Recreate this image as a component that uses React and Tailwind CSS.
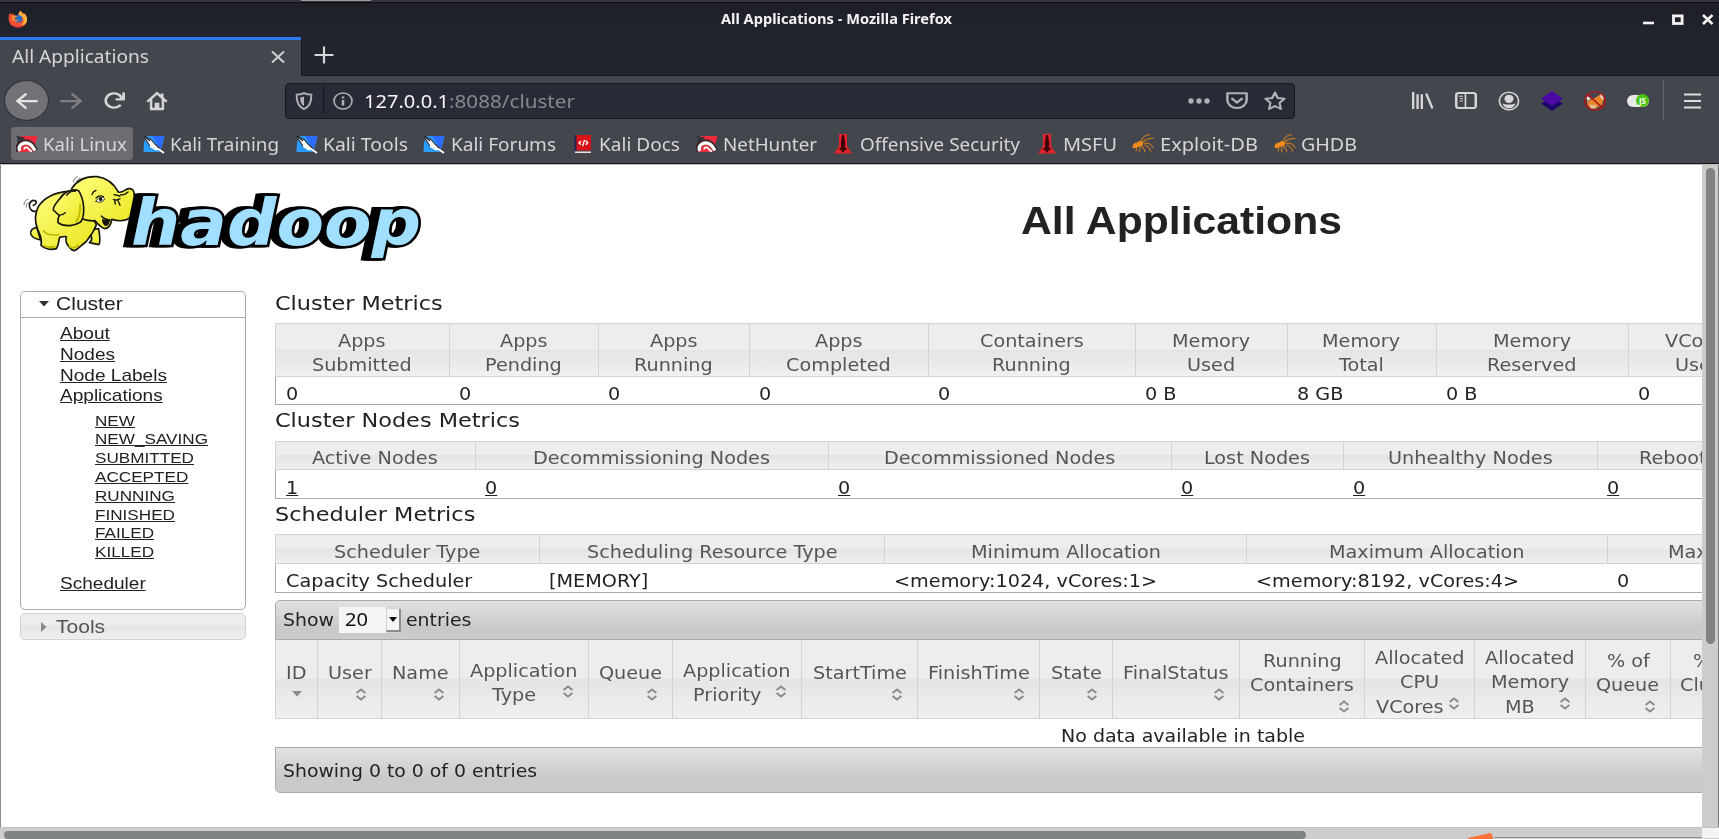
import React, { useLayoutEffect, useRef, useState } from "react";

const STRETCH = 1.108;

/* Text drawn with a horizontal stretch `k`; `w` fits it to an exact width. */
function T({ children, w, k = STRETCH, className = "" }) {
  const ref = useRef(null);
  const [natural, setNatural] = useState(0);
  useLayoutEffect(() => {
    if (!natural) setNatural(ref.current.getBoundingClientRect().width);
  }, [natural]);
  const scale = w && natural ? w / natural : k;
  return (
    <span className="inline-block shrink-0 align-top" style={natural ? { width: natural * scale } : undefined}>
      <span
        ref={ref}
        className={"block w-max whitespace-nowrap origin-left " + className}
        style={natural ? { transform: `scaleX(${scale})` } : undefined}
      >
        {children}
      </span>
    </span>
  );
}

/* ---------- icons ---------- */

function Icon({ size = "h-5 w-[22px]", className = "", children }) {
  return (
    <svg viewBox="0 0 16 16" preserveAspectRatio="none" className={"shrink-0 " + size + " " + className} fill="currentColor">
      {children}
    </svg>
  );
}

const BACK =
  "M15 7H3.414l4.293-4.293a1 1 0 0 0-1.414-1.414l-6 6a1 1 0 0 0 0 1.414l6 6a1 1 0 0 0 1.414-1.414L3.414 9H15a1 1 0 0 0 0-2z";

function Firefox() {
  return (
    <svg viewBox="0 0 20 18" className="h-[18px] w-5 shrink-0">
      <path d="M1 4.500 2.500 3l.8 1.600L5 3l.5 2L9 6l4-5 2 2.500C18 5 19.300 8 19 10.500 18.500 15 14.500 17.500 10 17.500S1 14.500.7 9.500C.6 7.500.8 6 1 4.500z" fill="#f4512f" />
      <path d="M12.500.5c-2 2-2.500 4-1.500 5.500 3 .5 5 2.500 4.500 5.500-.4 2-1.500 3-3 3.500 4 .5 6.500-2 6.600-5C19.300 5 16 2.500 15 4c-1-1-2.200-2-2.500-3.500z" fill="#ffb13b" />
      <path d="M2 13c3 4.500 11 4.500 14 .5-2 3-4.500 4-7 3.900C6 17 3.500 15.500 2 13z" fill="#e4244f" />
      <ellipse cx="10" cy="8.800" rx="4.400" ry="3.800" fill="#2f68c5" />
      <path d="M4 6c2-1 4-.6 5.500.8-1 .9-2.700.6-3 1.700C7 10 9 10.500 11 9.800c-1 2.200-6 2.500-7.500-1z" fill="#ff8a2b" />
    </svg>
  );
}

function KaliMark({ red }) {
  return (
    <svg viewBox="0 0 22 20" className="h-5 w-[22px] shrink-0">
      {red ? (
        <>
          <path d="M4 2h17.500L17 18H.5L3 10z" fill="#ee2a3c" />
          <path d="M0 1c3 2 5 1.500 9 2.500L1.500 12C0 8 3 5 1 4z" fill="#33353c" />
          <path d="M3 17C0 12.500 4.500 8 10 8c4.500.2 6.500 3 9.500 8.500" fill="none" stroke="#3a2a31" strokeWidth="5.400" />
          <path d="M4 17C1.500 13 5 9 10 8.800c4.500.2 6.500 3.200 9 7.700" fill="none" stroke="#fff" strokeWidth="3.200" />
          <path d="M8 15.500c0-2.500 3-3 4.500-.8 1 1.500 2 2.300 3.500 2.800" fill="none" stroke="#fff" strokeWidth="1.800" />
        </>
      ) : (
        <>
          <path d="M1 8 4 2h17.500L17.500 18H.5z" fill="#2a9cff" />
          <path d="M9 2h12.500l-4 14z" fill="#2d6bff" />
          <path d="M0 1.500 8 5.500l4.500 5 9 8.500-8-4-6-2-2.500-4z" fill="#fff" stroke="#2c2e35" strokeWidth="1.100" />
          <path d="m7 12 5 3 4 .5 5 3.500" fill="none" stroke="#fff" strokeWidth="2" />
          <path d="m1 2 6 5" stroke="#2c2e35" strokeWidth="1.600" />
        </>
      )}
    </svg>
  );
}

function DocsMark() {
  return (
    <svg viewBox="0 0 22 20" className="h-5 w-[22px] shrink-0">
      <path d="M2 1h16v15.500H2z" fill="#d8141a" />
      <path d="M1.500 1h2v16h-2z" fill="#2a2350" />
      <path d="M2 17.500h16v1.500H2z" fill="#e9e4e0" />
      <path d="m8 7-2 2 2 1.800m4.500-4.300 2.300 2.300-2 2M11.500 6l-1.800 6" fill="none" stroke="#fff" strokeWidth="1.300" />
    </svg>
  );
}

function OffsecMark() {
  return (
    <svg viewBox="0 0 22 20" className="h-5 w-[22px] shrink-0">
      <path d="M7 0h8v12l5 7.500H2L7 12z" fill="#e3222b" />
      <path d="M10 1h2l1.200 8-.4 4 2.700 2.500-2.500.5-2 3-2-3-2.500-.5L9.200 13l-.4-4z" fill="#3b0508" />
    </svg>
  );
}

function BugMark() {
  return (
    <svg viewBox="0 0 22 20" className="h-5 w-[22px] shrink-0" fill="none" stroke="#c87a22" strokeWidth="1.100">
      <path d="M.5 13c0-3 2-4.500 5-4.500 1-2 4-2 5.500-.5 1 2-.5 4.500-3 4.500C6 12.500 5 14 3 14c-1 0-2 1-2.500-1z" fill="#f08a1c" stroke="none" />
      <path d="M9 8c1-4 4-7 9-7.500M11 8c3-3 6-4 10.500-3.500M12 9.500c4-1 6-.5 9.500 4.500M12 11c3 0 5 2 7 6.500M9 12c3 1.500 3.500 3 4 6.500M5 13l-1 4.500M8 12l-.5 6" />
    </svg>
  );
}

function Elephant() {
  return (
    <svg viewBox="60 522 348 240" className="h-20 w-[116px] shrink-0" strokeLinejoin="round" strokeLinecap="round">
      <defs>
        <linearGradient id="skin" x1="0" y1="0" x2="1" y2="1">
          <stop offset="0" stopColor="#ffff7d" />
          <stop offset="1" stopColor="#e9e51c" />
        </linearGradient>
      </defs>
      <g fill="url(#skin)" stroke="#16160c" strokeWidth="5">
        <path d="M112 632c-14 6-24-4-24-16 0-10 10-18 18-14 6 4 2 12-6 14" fill="none" />
        <path d="M110 682c-12 2-20 10-18 20 6 12 16 16 30 18z" />
        <path d="M266 690c6 14 16 30 2 38l28 6c6-4 4-24 0-48z" />
        <path d="M205 574c-40 2-74 20-90 46-12 24-10 48-2 68 8 18 14 32 10 48 10 12 30 14 46 10 8-10 6-22 10-34 8-2 16-4 20-2-4 14 0 22 8 30 6 8 8 12 16 12 14-6 22-18 34-26 8-10 22-24 32-52l-30-60z" />
        <path d="M215 566c16-26 42-38 76-36 30 4 50 20 64 46 12 4 20-8 30-10 12-2 18 6 18 20 4 24 2 50-10 64-16 16-38 14-58 8-2 16-8 26-20 28-12-2-20-12-30-24-18 2-28-2-40-6z" />
        <path d="M236 572c-22-8-46 6-58 26-10 12-20 22-18 32 6 6 12 12 18 16-4 8-6 14-4 22 22 16 52 8 68-2 14-20 12-64-6-94z" />
      </g>
      <path d="M306 656c8 3 16 4 24 4-2 12-6 18-12 18-8-2-12-12-12-22z" fill="#16160c" />
      <path d="M176 646c10 0 14-2 20-8M226 574c-10-4-18 2-26 12M276 584c2-8 6-11 12-13M342 584l18 4M340 598c8 4 14 2 20-2M344 602l2 10M354 602l6 14M330 660c-14-2-20-4-26-12M362 584c8 2 14 0 22-8" fill="none" stroke="#16160c" strokeWidth="4" />
      <path d="M288 604c6-12 18-16 26-8-4 10-16 14-26 8z" fill="#fff" stroke="#16160c" strokeWidth="2.500" />
      <ellipse cx="302" cy="598" rx="5" ry="5.500" fill="#16160c" />
      <path d="M288 594c6-6 14-8 22-4" fill="none" stroke="#16160c" strokeWidth="4" />
      <path d="M72 614c0-8 4-14 12-16M78 622c0-6 2-10 6-14M220 546c0-6 4-12 12-16M228 548c2-6 6-10 12-14" fill="none" stroke="#777" strokeWidth="3" />
      <path d="M132 738c10 4 20 4 32 2M208 740c8 6 16 6 26-4M130 692c10 14 30 14 46 12M228 664c8-6 14-30 12-50" fill="none" stroke="#bdb800" strokeWidth="5" />
    </svg>
  );
}

function SortIcon({ className = "" }) {
  return (
    <svg viewBox="0 0 10 13" className={"h-[13px] w-2.5 shrink-0 " + className} fill="none" stroke="#8a8a8a" strokeWidth="1.900">
      <path d="M.6 5 5 1.400 9.400 5M.6 8 5 11.600 9.400 8" />
    </svg>
  );
}

/* ---------- browser chrome ---------- */

const BOOKMARKS = [
  { label: "Kali Linux", w: 84, icon: <KaliMark red />, pos: "pl-[5px] pr-1.5 bg-[#6c6e73] rounded-[4px]", gap: "ml-[5px]" },
  { label: "Kali Training", w: 109, icon: <KaliMark />, pos: "ml-2.5", gap: "ml-[5px]" },
  { label: "Kali Tools", w: 85, icon: <KaliMark />, pos: "ml-[17px]", gap: "ml-[5px]" },
  { label: "Kali Forums", w: 105, icon: <KaliMark />, pos: "ml-[15px]", gap: "ml-1.5" },
  { label: "Kali Docs", w: 81, icon: <DocsMark />, pos: "ml-[17px]", gap: "ml-1" },
  { label: "NetHunter", w: 94, icon: <KaliMark red />, pos: "ml-4", gap: "ml-[5px]" },
  { label: "Offensive Security", w: 160, icon: <OffsecMark />, pos: "ml-[15px]", gap: "ml-1.5" },
  { label: "MSFU", w: 54, icon: <OffsecMark />, pos: "ml-4", gap: "ml-[5px]" },
  { label: "Exploit-DB", w: 98, icon: <BugMark />, pos: "ml-[15px]", gap: "ml-1.5" },
  { label: "GHDB", w: 56, icon: <BugMark />, pos: "ml-4", gap: "ml-[5px]" },
];

function Chrome() {
  return (
    <header className="flex h-[165px] shrink-0 flex-col bg-[#44464d] font-['Noto_Sans',sans-serif] text-[18px] text-[#d5d6d8]">
      <div className="flex h-[2px] bg-[#35373e]">
        <div className="ml-[301px] h-px w-[70px] bg-[#9a9c9c]" />
      </div>
      <div className="h-px bg-[#0c0d10]" />
      <div className="flex h-[34px] items-center bg-gradient-to-b from-[#1d1e26] to-[#22252e] pl-2 pr-[5px]">
        <div className="-mt-0.5"><Firefox /></div>
        <div className="-mt-[3px] ml-[693px] text-[14px] font-bold leading-[32px] text-[#f1f2f3]">
          <T w={231}>All Applications - Mozilla Firefox</T>
        </div>
        <svg viewBox="0 0 72 12" className="ml-auto h-3 w-[72px]" fill="none" stroke="#f4f4f4">
          <path d="M1 9h11" strokeWidth="2.600" />
          <rect x="31.500" y="1.900" width="8.600" height="7.600" strokeWidth="2.800" />
          <path d="m61 1 9.500 9M70.500 1 61 10" strokeWidth="2.500" />
        </svg>
      </div>
      <div className="flex h-[39px] bg-[#22252e]">
        <div className="flex w-[301px] items-center border-t-[3px] border-[#2d7bf3] bg-[#44464d] pb-[3px] pl-3 leading-[33px]">
          <T w={137}>All Applications</T>
          <svg viewBox="0 0 14 12" className="ml-[122px] h-3 w-3.5" stroke="#cfd0d2" strokeWidth="2">
            <path d="m1 .5 12 11M13 .5l-12 11" />
          </svg>
        </div>
        <div className="flex flex-1 items-center border-b border-l border-[#17181e] pl-3">
          <svg viewBox="0 0 20 18" className="mb-0.5 h-[18px] w-5" stroke="#d5d6d8" strokeWidth="2.200">
            <path d="M.5 9h19M10 .5v17" />
          </svg>
        </div>
      </div>
      <div className="flex h-[49px] items-center">
        <div className="ml-[5px] flex h-[39px] w-[43px] items-center justify-center rounded-[50%] bg-[#707277] text-[#e4e4e5] outline outline-1 outline-[#33353b]">
          <Icon size="h-[18px] w-[22px]"><path d={BACK} /></Icon>
        </div>
        <Icon size="h-[18px] w-[22px]" className="ml-3 -scale-x-100 text-[#7d7f84]"><path d={BACK} /></Icon>
        <Icon size="h-[19px] w-[22px]" className="ml-[21px]">
          <path d="M15 1a1 1 0 0 0-1 1v2.418A6.995 6.995 0 1 0 8 15a6.954 6.954 0 0 0 4.950-2.050 1 1 0 0 0-1.414-1.414A5.019 5.019 0 1 1 12.549 6H10a1 1 0 0 0 0 2h5a1 1 0 0 0 1-1V2a1 1 0 0 0-1-1z" />
        </Icon>
        <Icon className="ml-[21px]">
          <path d="M8 .4.300 8l1.200 1.200L2.800 8v6.300c0 .6.400 1 1 1h8.400c.6 0 1-.4 1-1V8l1.300 1.200L15.700 8l-3-3V2h-2v1zM8 3l3.400 3.400v7H9.700v-4H6.300v4H4.600v-7z" fillRule="evenodd" />
          <path d="M7.600 11h.9v1.200h-.9z" />
        </Icon>
        <div className="ml-[117px] flex h-9 w-[1010px] items-center rounded-[4px] border border-[#17181e] bg-[#282a36] pl-[9px] text-[#b0b1b4]">
          <Icon size="h-[18px] w-[18px]">
            <path d="M8 .9c2 .9 4 1.300 6.500 1.400C14.700 8 13 13 8 15.200 3 13 1.300 8 1.500 2.300 4 2.200 6 1.800 8 .9z" fill="none" stroke="currentColor" strokeWidth="1.700" />
            <path d="M8 4v8.500C5.400 11 4.600 8.300 4.500 4.800 5.800 4.700 7 4.500 8 4z" />
          </Icon>
          <div className="ml-[10px] h-[27px] w-px bg-[#15161b]" />
          <Icon size="h-[18px] w-5" className="ml-[9px]">
            <circle cx="8" cy="8" r="7.200" fill="none" stroke="currentColor" strokeWidth="1.300" />
            <path d="M7 7h2v5H7zM7 4h2v1.800H7z" />
          </Icon>
          <div className="ml-[11px] flex leading-[34px] text-[#f5f5f6]">
            <T w={85}>127.0.0.1</T>
            <span className="text-[#87888d]"><T w={126}>:8088/cluster</T></span>
          </div>
          <svg viewBox="0 0 22 6" className="ml-auto mr-4 h-1.5 w-[22px]" fill="currentColor">
            <circle cx="3" cy="3" r="2.700" /><circle cx="11" cy="3" r="2.700" /><circle cx="19" cy="3" r="2.700" />
          </svg>
          <Icon size="h-[18px] w-[22px]" className="mr-4">
            <path d="M1 1.200h14v6a7 7 0 0 1-14 0z" fill="none" stroke="currentColor" strokeWidth="1.800" strokeLinejoin="round" />
            <path d="M4.500 6 8 9.300 11.500 6" fill="none" stroke="currentColor" strokeWidth="1.900" strokeLinecap="round" />
          </Icon>
          <Icon className="mr-2">
            <path d="m8 1.200 2 4.400 4.900.6-3.600 3.300 1 4.900L8 12l-4.300 2.400 1-4.900L1.100 6.200 6 5.600z" fill="none" stroke="currentColor" strokeWidth="1.600" strokeLinejoin="round" />
          </Icon>
        </div>
        <div className="ml-[117px] flex items-center gap-[21px]">
          <Icon size="h-[17px] w-[22px]">
            <path d="M0 0h1.700v16H0zM3.200 2h1.700v14H3.200zM6.300 2H8v14H6.300zM9.500 1.700l1.700-.5 4.500 14-1.700.6z" />
          </Icon>
          <Icon size="h-[17px] w-[22px]">
            <rect x=".9" y=".9" width="14.200" height="14.200" rx="2" fill="none" stroke="currentColor" strokeWidth="1.800" />
            <path d="M7 1h1.200v14H7zM2.800 3.500h3v1h-3zM3.500 5.800h2.300v1H3.500zM3.500 8h2.300v1H3.500z" />
          </Icon>
          <Icon>
            <circle cx="8" cy="8" r="7" fill="none" stroke="currentColor" strokeWidth="1.200" />
            <circle cx="8" cy="6.200" r="3.300" />
            <path d="M3.200 9.800c1 .6 1.600 1 4.800 1s3.800-.4 4.800-1C12 12.500 10.500 13.800 8 13.800s-4-1.300-4.800-4z" />
          </Icon>
          <Icon>
            <path d="M8 4.500 16 10l-8 6-8-6z" fill="#1c0668" />
            <path d="m8 0 8 6-8 6-8-6z" fill="#4a0aa3" />
          </Icon>
          <Icon>
            <path d="M2.500 8 8 5.500l5-3.500 1.500 4-1.500 5-4.500 3-4-.5-2-2.500z" fill="#e8872c" />
            <path d="M1.500 3.500 5 6 2.500 8zM12 1.500 14.500 4l-.5 3-2-2z" fill="#f3e9e2" />
            <path d="m4 10.500 2.500 1L9 11l-1 3H5z" fill="#e3c3a4" />
            <circle cx="8" cy="8" r="7.300" fill="none" stroke="#b3141c" strokeWidth="1.100" />
            <path d="m3 3 10 10" stroke="#b3141c" strokeWidth="1.100" />
          </Icon>
          <div className="flex h-3 w-[22px] items-center justify-end rounded-full bg-[#e9e9e9]">
            <div className="flex h-[13px] w-[13px] shrink-0 items-center justify-center rounded-full bg-[#4cc40c] text-[8px] font-bold leading-none text-white">JS</div>
          </div>
        </div>
        <div className="ml-[14px] h-[41px] w-px bg-[#66686e]" />
        <svg viewBox="0 0 17 16" className="ml-5 h-4 w-[17px]" stroke="#dcdddf" strokeWidth="2.100">
          <path d="M0 1.500h17M0 8h17M0 14.500h17" />
        </svg>
      </div>
      <nav className="flex h-[38px] shrink-0 pl-[11px] pt-[2px]">
        {BOOKMARKS.map((b) => (
          <div key={b.label} className={"flex h-[33px] items-center " + b.pos}>
            {b.icon}
            <span className={"leading-[34px] " + b.gap}><T w={b.w}>{b.label}</T></span>
          </div>
        ))}
      </nav>
      <div className="h-px bg-[#16171b]" />
      <div className="h-px bg-[#bdbdbd]" />
    </header>
  );
}

/* ---------- page ---------- */

const STATES = ["NEW", "NEW_SAVING", "SUBMITTED", "ACCEPTED", "RUNNING", "FINISHED", "FAILED", "KILLED"];

function Sidebar() {
  return (
    <aside className="ml-[19px] mt-[3px] w-[226px] shrink-0 font-['Liberation_Sans',sans-serif] text-[#222]">
      <div className="h-[319px] rounded-[5px] border border-[#aaa] bg-white">
        <div className="flex h-[26px] items-center border-b border-[#aaa] pb-[2px] pl-[18px] text-[19px] leading-[23px]">
          <svg viewBox="0 0 10 6" className="mr-[7px] mt-px h-1.5 w-2.5" fill="#333"><path d="M0 0h10L5 5.500z" /></svg>
          <T>Cluster</T>
        </div>
        <div className="flex flex-col pl-[39px] pt-[6px] text-[17px] leading-[20.8px]">
          {["About", "Nodes", "Node Labels", "Applications"].map((l) => (
            <a key={l}><T className="underline" k={1.12}>{l}</T></a>
          ))}
          <div className="flex flex-col pl-[34.5px] pt-[4.5px] text-[15.1px] leading-[18.8px]">
            {STATES.map((l) => (
              <a key={l}><T className="underline" k={1.135}>{l}</T></a>
            ))}
          </div>
          <a className="pt-[11.5px]"><T className="underline" k={1.12}>Scheduler</T></a>
        </div>
      </div>
      <div className="mt-[3px] flex h-[27px] items-center rounded-[5px] border border-[#d3d3d3] bg-[linear-gradient(#ededed_50%,#e5e5e5_50%,#efefef)] pl-5 text-[19px] leading-[25px] text-[#555]">
        <svg viewBox="0 0 6 10" className="mr-[9px] h-2.5 w-1.5" fill="#888"><path d="M0 0v10l5.500-5z" /></svg>
        <T>Tools</T>
      </div>
    </aside>
  );
}

const HEAD_BG = "bg-[linear-gradient(#ededed_49%,#e4e4e4_50%,#f0f0f0)]";
const CELL_STRETCH = 1.13;

function Metrics({ cols, heads, values, headClass, cellClass, rowClass, link }) {
  return (
    <div className="text-[17px] leading-[24.3px]">
      <div className={"grid border-y border-l border-[#d3d3d3] text-[#555] " + HEAD_BG + " " + cols + " " + headClass}>
        {heads.map((h, i) => (
          <div key={i} className={"flex flex-col items-center overflow-hidden " + cellClass + (i ? " border-l border-[#d3d3d3]" : "")}>
            {h.split("|").map((line) => <T key={line} k={CELL_STRETCH}>{line}</T>)}
          </div>
        ))}
      </div>
      <div className={"grid border-b border-l border-[#aaa] bg-white text-[#222] " + cols + " " + rowClass}>
        {values.map((v, i) => (
          <div key={i} className="overflow-hidden pl-[10px]">
            <T className={link ? "underline" : ""} k={CELL_STRETCH}>{v}</T>
          </div>
        ))}
      </div>
    </div>
  );
}

const COLUMNS = [
  { lines: ["ID"], pt: "pt-[20.5px]", sorted: true },
  { lines: ["User"], pt: "pt-[20.5px]" },
  { lines: ["Name"], pt: "pt-[20.5px]" },
  { lines: ["Application", "Type"], pt: "pt-[18.5px]", inline: true },
  { lines: ["Queue"], pt: "pt-[20.5px]" },
  { lines: ["Application", "Priority"], pt: "pt-[18.5px]", inline: true },
  { lines: ["StartTime"], pt: "pt-[20.5px]" },
  { lines: ["FinishTime"], pt: "pt-[20.5px]" },
  { lines: ["State"], pt: "pt-[20.5px]" },
  { lines: ["FinalStatus"], pt: "pt-[20.5px]" },
  { lines: ["Running", "Containers"], pt: "pt-[8.5px]" },
  { lines: ["Allocated", "CPU", "VCores"], pt: "pt-[6px]", inline: true },
  { lines: ["Allocated", "Memory", "MB"], pt: "pt-[6px]", inline: true },
  { lines: ["% of", "Queue"], pt: "pt-[8.5px]" },
  { lines: ["% of", "Cluster"], pt: "pt-[8.5px]" },
];

function AppTable() {
  return (
    <div className="text-[17px] leading-[24.3px] text-[#222]">
      <div className="flex h-10 items-center rounded-tl-[5px] border border-[#aaa] bg-[linear-gradient(#e2e2e2,#c9c9c9_70%,#cbcbcb)] pl-[7px]">
        <T>Show</T>
        <div className="ml-[5px] flex h-[26px] w-[62px] items-center bg-[#d6d6d6] font-['Noto_Sans',sans-serif] text-[18px] text-[#111]">
          <span className="h-full w-[47px] bg-[#f5f5f4] pl-1.5 leading-[25px]"><T w={23}>20</T></span>
          <div className="flex h-[23px] w-[15px] items-center justify-center border-b-2 border-l border-r-2 border-b-[#8c8c8c] border-l-[#d0d0d0] border-r-[#8c8c8c] bg-[#f5f5f4]">
            <svg viewBox="0 0 8 5" className="h-[5px] w-2" fill="#000"><path d="M0 0h8L4 5z" /></svg>
          </div>
        </div>
        <span className="ml-[5px]"><T>entries</T></span>
      </div>
      <div className={"grid h-[79px] grid-cols-[42px_64px_78px_129px_84px_129px_116px_122px_73px_127px_125px_110px_111px_85px_88px] border-b border-[#d3d3d3] text-[#555] " + HEAD_BG}>
        {COLUMNS.map((c, i) => {
          const plain = c.inline ? c.lines.slice(0, -1) : c.lines;
          return (
            <div key={i} className={"flex flex-col items-center overflow-hidden border-l border-[#d3d3d3] " + c.pt}>
              {plain.map((l) => <T key={l} k={CELL_STRETCH}>{l}</T>)}
              {c.inline ? (
                <div className="flex w-full">
                  <span className="flex flex-1 justify-center"><T k={CELL_STRETCH}>{c.lines[c.lines.length - 1]}</T></span>
                  <span className="w-5 pt-[2.5px]"><SortIcon className="-ml-[5px]" /></span>
                </div>
              ) : c.sorted ? (
                <svg viewBox="0 0 10 6" className="mt-1.5 h-1.5 w-2.5" fill="#8a8a8a"><path d="M0 0h10L5 5.500z" /></svg>
              ) : (
                <span className="mt-[3px] flex w-full justify-end pr-[15px]"><SortIcon /></span>
              )}
            </div>
          );
        })}
      </div>
      <div className="flex h-[28px] bg-white pl-[786px] pt-[5px]"><T w={244}>No data available in table</T></div>
      <div className="flex h-[46px] items-center rounded-bl-[5px] border border-[#aaa] bg-[linear-gradient(#e2e2e2,#c9c9c9_70%,#cbcbcb)] pl-[7px] pt-[2px]">
        <T>Showing 0 to 0 of 0 entries</T>
      </div>
    </div>
  );
}

function Heading({ children, className = "h-[35px]" }) {
  return <h2 className={"text-[20.2px] leading-[30px] text-[#222] " + className}><T>{children}</T></h2>;
}

export default function App() {
  return (
    <div className="flex h-[839px] w-[1719px] flex-col overflow-hidden bg-[#cdcdcc]">
      <Chrome />
      <div className="flex h-[662px] shrink-0 border-r border-[#77787a]">
        <div className="flex w-[1702px] shrink-0 flex-col overflow-hidden border-l border-[#8c8c8c] bg-white">
          <div className="flex h-[123px] shrink-0 pl-[19px] font-['Liberation_Sans',sans-serif]">
            <div className="flex pt-[9px]">
              <Elephant />
              <svg viewBox="0 0 300 90" className="relative -left-4 h-[90px] w-[300px] overflow-visible [filter:drop-shadow(-3px_0_0_#000)_drop-shadow(-4px_0_0_#000)]">
                <text
                  x="11"
                  y="71"
                  textLength="290"
                  lengthAdjust="spacingAndGlyphs"
                  className="fill-[#a0dfff] stroke-black stroke-[5px] font-['DejaVu_Sans',sans-serif] text-[64px] font-bold italic [paint-order:stroke]"
                >
                  hadoop
                </text>
              </svg>
            </div>
            <h1 className="ml-[585px] pt-[34px] text-[38.1px] font-bold leading-[44px] text-[#222]">
              <T w={321}>All Applications</T>
            </h1>
          </div>
          <div className="flex">
            <Sidebar />
            <main className="ml-[29px] w-[1830px] shrink-0 font-['DejaVu_Sans',sans-serif]">
              <Heading>Cluster Metrics</Heading>
              <Metrics
                cols="grid-cols-[173px_149px_151px_179px_207px_152px_149px_192px_142px]"
                heads={["Apps|Submitted", "Apps|Pending", "Apps|Running", "Apps|Completed", "Containers|Running", "Memory|Used", "Memory|Total", "Memory|Reserved", "VCores|Used"]}
                values={["0", "0", "0", "0", "0", "0 B", "8 GB", "0 B", "0"]}
                headClass="h-[54px]"
                cellClass="pt-[5px] pr-px"
                rowClass="h-[28px] pt-[4.5px]"
              />
              <Heading className="h-[36px]">Cluster Nodes Metrics</Heading>
              <Metrics
                cols="grid-cols-[199px_353px_343px_172px_254px_242px]"
                heads={["Active Nodes", "Decommissioning Nodes", "Decommissioned Nodes", "Lost Nodes", "Unhealthy Nodes", "Rebooted Nodes"]}
                values={["1", "0", "0", "0", "0", "0"]}
                headClass="h-[29px]"
                cellClass="pt-[4px] pr-px"
                rowClass="h-[29px] pt-[5.5px]"
                link
              />
              <Heading>Scheduler Metrics</Heading>
              <Metrics
                cols="grid-cols-[263px_345px_362px_361px_478px]"
                heads={["Scheduler Type", "Scheduling Resource Type", "Minimum Allocation", "Maximum Allocation", "Maximum Cluster Application Priority"]}
                values={["Capacity Scheduler", "[MEMORY]", "<memory:1024, vCores:1>", "<memory:8192, vCores:4>", "0"]}
                headClass="h-[30px]"
                cellClass="pt-[5px]"
                rowClass="h-[29px] pt-[5px]"
              />
              <div className="h-[7px]" />
              <AppTable />
            </main>
          </div>
        </div>
        <div className="flex w-4 justify-center bg-[#cdcccb] pt-[3px]">
          <div className="h-[476px] w-[9px] rounded-full bg-[#7f8383]" />
        </div>
      </div>
      <div className="flex h-3 shrink-0 border-t border-[#c3c1bc] bg-[#cdcdcc]">
        <div className="ml-1 mt-[3px] h-2 w-[1302px] shrink-0 rounded-full bg-[#7f8383]" />
        <svg viewBox="0 0 26 6" className="ml-[162px] mt-[5px] h-1.5 w-[26px] shrink-0"><path d="m0 5 22-5q2.500 0 3 6H0z" fill="#ff7139" /></svg>
        <div className="mt-[9px] h-px w-[208px] shrink-0 bg-[#8e8e8e]" />
        <div className="h-[10px] flex-1 bg-[#f4f3f2]" />
      </div>
    </div>
  );
}
